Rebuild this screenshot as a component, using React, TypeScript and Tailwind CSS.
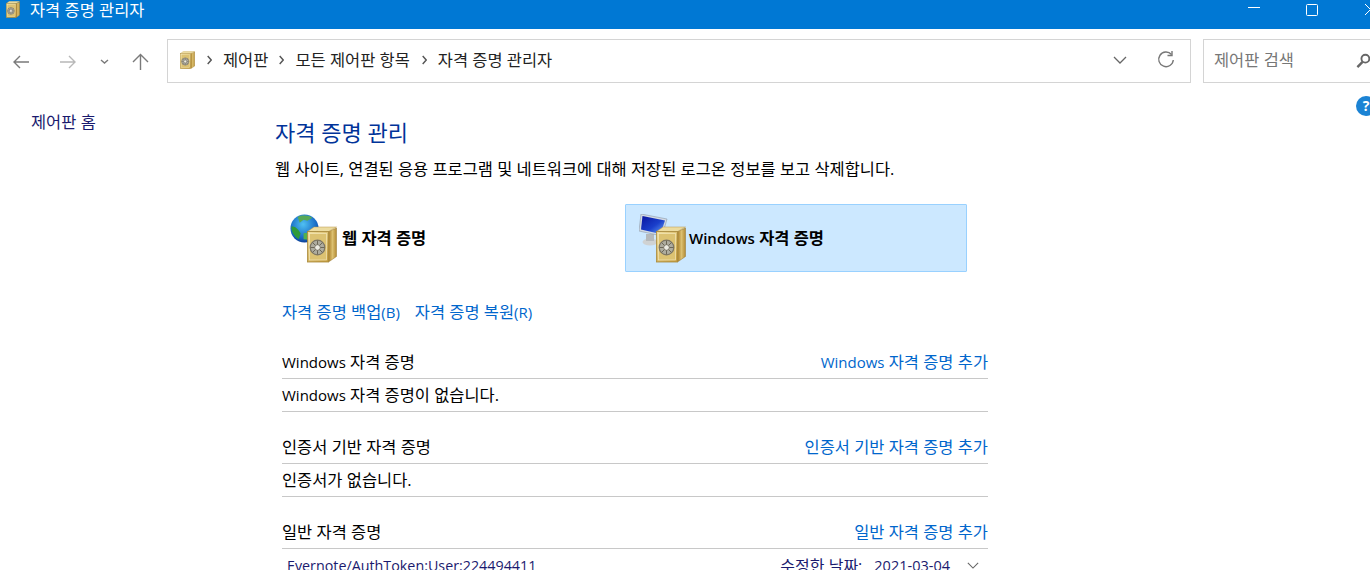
import type { ReactNode } from 'react';

const font = { fontFamily: '"Open Sans", "Noto Sans CJK KR", sans-serif' };

// Hangul runs wider than Latin in the reference, so Latin gets its own size
const L = ({ children }: { children: ReactNode }) => <span className="text-[15px]">{children}</span>;

const Safe = ({ className }: { className: string }) => (
  <svg viewBox="0 0 30 36" className={className}>
    <defs>
      <linearGradient id="safeFront" x1="0" y1="0" x2="0.7" y2="1">
        <stop offset="0" stopColor="#f0dfa0" />
        <stop offset="1" stopColor="#c6a044" />
      </linearGradient>
      <linearGradient id="safeSide" x1="0" y1="0" x2="1" y2="0">
        <stop offset="0" stopColor="#a97f2a" />
        <stop offset="0.5" stopColor="#dcc070" />
        <stop offset="1" stopColor="#b38b34" />
      </linearGradient>
    </defs>
    <path d="M21.5 5 L29.5 1.5 V30 L21.5 35.5 Z" fill="url(#safeSide)" stroke="#96742a" strokeWidth="0.5" />
    <path d="M0.5 5 L7 0.5 H29.5 L21.5 5 Z" fill="#ecdca0" stroke="#b8974a" strokeWidth="0.5" />
    <rect x="0.5" y="5" width="21" height="30.5" fill="url(#safeFront)" stroke="#a88838" strokeWidth="0.8" />
    <rect x="2.5" y="7" width="17" height="26.5" fill="#dcc272" stroke="#f5e9bb" strokeWidth="0.7" />
    <circle cx="10.5" cy="21" r="7.3" fill="#aeac9f" stroke="#7d7665" strokeWidth="1.2" />
    <path d="M10.5 14 V28 M3.5 21 H17.5 M5.5 16 L15.5 26 M15.5 16 L5.5 26" stroke="#6c6757" strokeWidth="1" />
    <circle cx="10.5" cy="21" r="2.8" fill="#ecebe2" stroke="#6f6a5c" strokeWidth="0.8" />
  </svg>
);

const Globe = () => (
  <svg viewBox="0 0 30 30" className="absolute left-0 top-[2px] h-[29px] w-[29px]">
    <defs>
      <radialGradient id="globeSea" cx="0.45" cy="0.35" r="0.7">
        <stop offset="0" stopColor="#4fc0f2" />
        <stop offset="0.7" stopColor="#1668c4" />
        <stop offset="1" stopColor="#0b3488" />
      </radialGradient>
    </defs>
    <circle cx="15" cy="15" r="14.5" fill="url(#globeSea)" />
    <path d="M8 3 C12 1 20 1 23 4 L18 7 L14 6 L10 9 Z" fill="#57a957" />
    <path d="M1.5 13 C5 12 9 16 11 20 L9 26 C4 23 1.5 19 1.5 13 Z" fill="#2f9a3a" />
    <path d="M14 20 L26 18 L22 27 L14 26 Z" fill="#52b04d" />
  </svg>
);

const Monitor = () => (
  <svg viewBox="0 0 30 34" className="absolute left-0 top-[2px] h-[34px] w-[30px]">
    <defs>
      <linearGradient id="screenBlue" x1="0" y1="0" x2="1" y2="1">
        <stop offset="0" stopColor="#08149f" />
        <stop offset="0.55" stopColor="#1a3fcb" />
        <stop offset="1" stopColor="#6aa6f5" />
      </linearGradient>
    </defs>
    <ellipse cx="11" cy="28" rx="7.5" ry="3.5" fill="#cfd2d3" />
    <path d="M7 20 H15 V27 H7 Z" fill="#b5b9bc" />
    <path d="M2 0 L28 5 L23 22 L0 17 Z" fill="#d3dae3" stroke="#8b98a9" strokeWidth="0.6" />
    <path d="M3.5 2 L26 6.5 L21.5 20 L2 15.5 Z" fill="url(#screenBlue)" />
  </svg>
);

const BigIcon = ({ kind }: { kind: 'web' | 'win' }) => (
  <div className="relative h-[52px] w-[47px] shrink-0">
    {kind === 'web' ? <Globe /> : <Monitor />}
    <Safe className="absolute bottom-[1px] right-0 h-[37px] w-[30px]" />
  </div>
);

const Crumb = () => (
  <svg viewBox="0 0 5 10" className="h-[10px] w-[5px] shrink-0" fill="none" stroke="#555" strokeWidth="1.4">
    <path d="M0.7 1 L4.2 5 L0.7 9" />
  </svg>
);

const Section = ({ title, action, empty }: { title: ReactNode; action: ReactNode; empty: ReactNode }) => (
  <section className="mb-[20px]">
    <div className="flex h-[32px] items-center justify-between border-b border-[#c8c8c8] pb-[2px]">
      <span className="text-black">{title}</span>
      <span className="text-[#0066cc]">{action}</span>
    </div>
    <div className="flex h-[33px] items-center border-b border-[#c8c8c8] text-black">{empty}</div>
  </section>
);

export default function App() {
  return (
    <div className="h-[570px] w-[1370px] overflow-hidden bg-white text-[16.45px] leading-[22px]" style={font}>
      <div className="flex h-[29px] items-center bg-[#0078d4] pb-[10px] text-white">
        <Safe className="ml-[6px] h-[17px] w-[14px]" />
        <span className="ml-[10px] flex-1 leading-[18px]">자격 증명 관리자</span>
        <svg viewBox="0 0 122 12" className="h-[12px] w-[122px] shrink-0" fill="none" stroke="white">
          <path d="M0 3.5 H12" />
          <rect x="58.5" y="0.5" width="11" height="11" rx="1" />
          <path d="M117 0 L128 11 M117 11 L128 0" />
        </svg>
      </div>

      <div className="flex h-[64px] items-center text-[#222]">
        <svg viewBox="0 0 150 20" className="ml-[12px] mt-[1px] h-[20px] w-[150px] shrink-0" fill="none">
          <path d="M2 10 H17 M8 4 L2 10 L8 16" stroke="#7a7a7a" strokeWidth="1.4" />
          <path d="M48 10 H63 M57 4 L63 10 L57 16" stroke="#b8b8b8" strokeWidth="1.4" />
          <path d="M89 8 L92.5 11 L96 8" stroke="#7a7a7a" strokeWidth="1.4" />
          <path d="M128.5 18 V3 M121 10 L128.5 2.5 L136 10" stroke="#7a7a7a" strokeWidth="1.4" />
        </svg>
        <div className="ml-[5px] flex h-[44px] w-[1024px] shrink-0 items-center border border-[#d4d4d4] pb-[2px] pl-[12px] pr-[15px]">
          <Safe className="h-[18px] w-[15px]" />
          <span className="ml-[12px]"><Crumb /></span>
          <span className="ml-[11px]">제어판</span>
          <span className="ml-[11px]"><Crumb /></span>
          <span className="ml-[11px]">모든 제어판 항목</span>
          <span className="ml-[12px]"><Crumb /></span>
          <span className="ml-[11px] flex-1">자격 증명 관리자</span>
          <svg viewBox="0 0 14 8" className="h-[8px] w-[14px]" fill="none" stroke="#666" strokeWidth="1.3">
            <path d="M1 1 L7 7 L13 1" />
          </svg>
          <svg viewBox="0 0 18 18" className="ml-[30px] h-[18px] w-[18px]" fill="none" stroke="#777" strokeWidth="1.4">
            <path d="M14.5 3.5 A7.3 7.3 0 1 0 16.3 9" />
            <path d="M10.5 4.5 H15 V0" />
          </svg>
        </div>
        <div className="ml-[12px] flex h-[44px] flex-1 items-center justify-between border border-r-0 border-[#d4d4d4] pb-[2px] pl-[10px] text-[#777]">
          <span>제어판 검색</span>
          <svg viewBox="0 0 16 16" className="mr-[-1px] h-[15px] w-[15px]" fill="none" stroke="#666" strokeWidth="2">
            <circle cx="10" cy="6" r="4.2" />
            <path d="M7 9.5 L1.5 15" strokeWidth="2.6" />
          </svg>
        </div>
      </div>

      <div className="relative flex">
        <div className="absolute right-[-6px] top-[3px] flex h-[20px] w-[20px] items-center justify-center rounded-full bg-[#1b83d4] text-[14px] font-bold text-white">?</div>
        <aside className="w-[275px] shrink-0 pl-[31px] pt-[18px] text-[#1a1a6e]">제어판 홈</aside>
        <main className="w-[713px] pt-[25px]">
          <h1 className="text-[22px] leading-[28px] text-[#003399]">자격 증명 관리</h1>
          <p className="mt-[12px] text-black">웹 사이트, 연결된 응용 프로그램 및 네트워크에 대해 저장된 로그온 정보를 보고 삭제합니다.</p>

          <div className="mt-[24px] flex h-[68px]">
            <div className="flex w-[350px] items-center pl-[15px] font-semibold text-black">
              <BigIcon kind="web" />
              <span className="ml-[5px]">웹 자격 증명</span>
            </div>
            <div className="flex w-[342px] items-center rounded-[1px] border border-[#99d1ff] bg-[#cce8ff] pl-[13px] font-semibold text-black">
              <BigIcon kind="win" />
              <span className="ml-[3px]"><L>Windows</L> 자격 증명</span>
            </div>
          </div>

          <div className="mt-[29px] flex gap-[15px] pl-[7px] text-[#0066cc]">
            <span>자격 증명 백업<L>(B)</L></span>
            <span>자격 증명 복원<L>(R)</L></span>
          </div>

          <div className="ml-[7px] mt-[24px]">
            <Section
              title={<><L>Windows</L> 자격 증명</>}
              action={<><L>Windows</L> 자격 증명 추가</>}
              empty={<span><L>Windows</L> 자격 증명이 없습니다.</span>}
            />
            <Section title="인증서 기반 자격 증명" action="인증서 기반 자격 증명 추가" empty="인증서가 없습니다." />
            <div className="flex h-[32px] items-center justify-between border-b border-[#c8c8c8] pb-[2px]">
              <span className="text-black">일반 자격 증명</span>
              <span className="text-[#0066cc]">일반 자격 증명 추가</span>
            </div>
            <div className="flex h-[33px] items-center justify-between pl-[5px] text-[#1a1a6e]">
              <span className="text-[14.3px]">Evernote/AuthToken:User:224494411</span>
              <span className="flex items-center">
                <span className="text-[16px]">수정한 날짜:</span>
                <span className="ml-[12px] text-[14.5px]">2021-03-04</span>
                <svg viewBox="0 0 14 8" className="ml-[17px] mr-[9px] h-[7px] w-[12px]" fill="none" stroke="#666" strokeWidth="1.3">
                  <path d="M1 1 L7 7 L13 1" />
                </svg>
              </span>
            </div>
          </div>
        </main>
      </div>
    </div>
  );
}
